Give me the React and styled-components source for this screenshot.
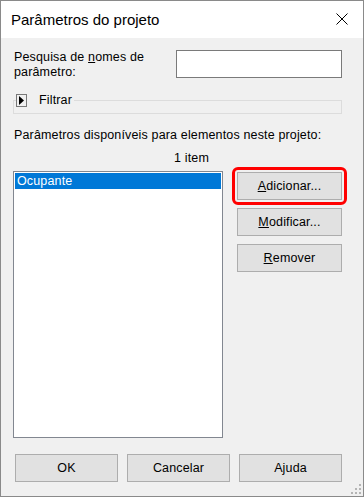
import React from 'react';
import styled, { createGlobalStyle } from 'styled-components';

const GlobalStyle = createGlobalStyle`
  html, body {
    margin: 0;
    padding: 0;
    background: #f0f0f0;
  }
  * {
    box-sizing: border-box;
  }
`;

// Window frame
const Window = styled.div`
  width: 364px;
  height: 497px;
  border: 1px solid #8a8a8a;
  display: flex;
  flex-direction: column;
  font-family: 'Liberation Sans', Arial, sans-serif;
  font-size: 12.5px;
  letter-spacing: 0.15px;
  color: #000;
  background: #f0f0f0;
  position: relative;
`;

const TitleBar = styled.div`
  height: 37px;
  background: #fff;
  display: flex;
  align-items: center;
  justify-content: space-between;
  padding: 0 15px 1px 10px;
`;

const Title = styled.div`
  font-size: 15px;
  letter-spacing: 0;
`;

const Body = styled.div`
  flex: 1;
  display: flex;
  flex-direction: column;
  padding: 12px 21px 0 12px;
`;

const SearchRow = styled.div`
  display: flex;
  justify-content: space-between;
  align-items: flex-start;
`;

const Label = styled.div`
  line-height: 15px;
  padding-left: 1px;
`;

const Input = styled.div`
  width: 166px;
  height: 28px;
  background: #fff;
  border: 1px solid #7a7a7a;
`;

const Group = styled.fieldset`
  margin: 14px 0 0;
  padding: 0;
  border: 1px solid #dcdcdc;
  min-width: 0;
`;

const Legend = styled.legend`
  padding: 0 2px 0 0;
  margin-left: 2px;
  height: 13px;
  display: flex;
  align-items: center;
  gap: 12px;
  line-height: 13px;
`;

const GroupFill = styled.div`
  height: 6px;
`;

const SectionLabel = styled.div`
  margin-top: 14px;
  line-height: 15px;
  padding-left: 1px;
`;

const Count = styled.div`
  margin-top: 8px;
  line-height: 15px;
  padding-left: 161px;
`;

const Main = styled.div`
  display: flex;
  justify-content: space-between;
  margin-top: 5px;
`;

const ListBox = styled.div`
  width: 210px;
  height: 267px;
  background: #fff;
  border: 1px solid #828790;
  padding: 1px;
`;

const ListItem = styled.div`
  height: 16px;
  line-height: 16px;
  padding-left: 2px;
  background: ${(p) => (p.$selected ? '#0078d7' : 'transparent')};
  color: ${(p) => (p.$selected ? '#fff' : '#000')};
`;

const Side = styled.div`
  display: flex;
  flex-direction: column;
  gap: 8px;
  padding-top: 1px;
`;

const Button = styled.div`
  position: relative;
  width: ${(p) => p.$w || 105}px;
  height: 28px;
  background: #e1e1e1;
  border: 1px solid #adadad;
  display: flex;
  align-items: center;
  justify-content: center;
`;

const Highlight = styled.div`
  position: absolute;
  left: -6px;
  right: -6px;
  top: -6px;
  bottom: -6px;
  border: 3px solid #ff0000;
  border-radius: 6px;
`;

const Footer = styled.div`
  display: flex;
  gap: 9px;
  margin-top: 16px;
  padding-left: 2px;
`;

const Grip = styled.svg`
  position: absolute;
  right: 1px;
  bottom: 1px;
`;

const CloseIcon = () => (
  <svg width="12" height="12" viewBox="0 0 12 12">
    <path d="M0.5 0.5 L11.5 11.5 M11.5 0.5 L0.5 11.5" stroke="#000" strokeWidth="1" />
  </svg>
);

const ExpandIcon = () => (
  <svg width="11" height="13" viewBox="0 0 11 13">
    <rect x="0.5" y="0.5" width="10" height="12" fill="none" stroke="#000" strokeDasharray="1 1" />
    <path d="M3 2 L8 6.5 L3 11 Z" fill="#000" />
  </svg>
);

const App = () => {
  return (
    <>
      <GlobalStyle />
      <Window>
        <TitleBar>
          <Title>Parâmetros do projeto</Title>
          <CloseIcon />
        </TitleBar>
        <Body>
          <SearchRow>
            <Label>
              Pesquisa de <u>n</u>omes de
              <br />
              parâmetro:
            </Label>
            <Input />
          </SearchRow>

          <Group>
            <Legend>
              <ExpandIcon />
              <span>Filtrar</span>
            </Legend>
            <GroupFill />
          </Group>

          <SectionLabel>Parâmetros disponíveis para elementos neste projeto:</SectionLabel>
          <Count>1 item</Count>

          <Main>
            <ListBox>
              <ListItem $selected>Ocupante</ListItem>
            </ListBox>
            <Side>
              <Button>
                <span>
                  <u>A</u>dicionar...
                </span>
                <Highlight />
              </Button>
              <Button>
                <span>
                  <u>M</u>odificar...
                </span>
              </Button>
              <Button>
                <span>
                  <u>R</u>emover
                </span>
              </Button>
            </Side>
          </Main>

          <Footer>
            <Button $w={103}>OK</Button>
            <Button $w={103}>Cancelar</Button>
            <Button $w={103}>Ajuda</Button>
          </Footer>
        </Body>
        <Grip width="12" height="12" viewBox="0 0 12 12">
          <g fill="#b4b4b4">
            <rect x="9" y="1" width="2" height="2" />
            <rect x="5" y="5" width="2" height="2" />
            <rect x="9" y="5" width="2" height="2" />
            <rect x="1" y="9" width="2" height="2" />
            <rect x="5" y="9" width="2" height="2" />
            <rect x="9" y="9" width="2" height="2" />
          </g>
        </Grip>
      </Window>
    </>
  );
};

export default App;
